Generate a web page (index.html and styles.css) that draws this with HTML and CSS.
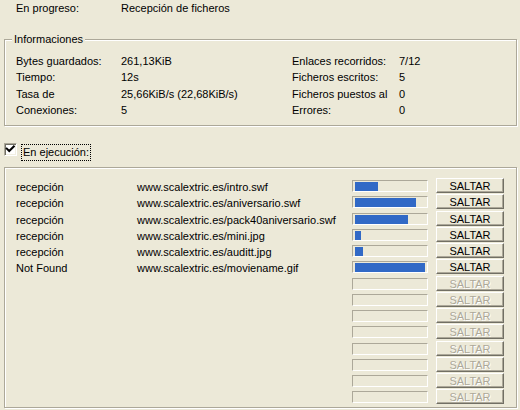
FILE: index.html
```html
<!DOCTYPE html>
<html lang="es">
<head>
<meta charset="utf-8">
<title>Recepción de ficheros</title>
<link rel="stylesheet" href="styles.css">
</head>
<body>
<div class="dlg">
  <div class="status">
    <span>En progreso:</span>
    <span>Recepción de ficheros</span>
  </div>

  <div class="group info">
    <span class="legend">Informaciones</span>
    <div class="info-grid">
      <span>Bytes guardados:</span><span>261,13KiB</span><span>Enlaces recorridos:</span><span>7/12</span>
      <span>Tiempo:</span><span>12s</span><span>Ficheros escritos:</span><span>5</span>
      <span>Tasa de</span><span>25,66KiB/s (22,68KiB/s)</span><span>Ficheros puestos al</span><span>0</span>
      <span>Conexiones:</span><span>5</span><span>Errores:</span><span>0</span>
    </div>
  </div>

  <div class="check-row">
    <span class="checkbox"><svg width="11" height="11" viewBox="0 0 11 11"><polyline points="1.8,4.6 4.2,7 8.8,2.4" fill="none" stroke="#000" stroke-width="2" stroke-linecap="square"/></svg></span>
    <span class="focus">En ejecución:</span>
  </div>

  <div class="group list">
    <div class="row"><span class="cell">recepción</span><span class="cell">www.scalextric.es/intro.swf</span><span class="bar"><span class="fill" style="width:23px"></span></span><span class="btn">SALTAR</span></div>
    <div class="row"><span class="cell">recepción</span><span class="cell">www.scalextric.es/aniversario.swf</span><span class="bar"><span class="fill" style="width:61px"></span></span><span class="btn">SALTAR</span></div>
    <div class="row"><span class="cell">recepción</span><span class="cell">www.scalextric.es/pack40aniversario.swf</span><span class="bar"><span class="fill" style="width:53px"></span></span><span class="btn">SALTAR</span></div>
    <div class="row"><span class="cell">recepción</span><span class="cell">www.scalextric.es/mini.jpg</span><span class="bar"><span class="fill" style="width:6px"></span></span><span class="btn">SALTAR</span></div>
    <div class="row"><span class="cell">recepción</span><span class="cell">www.scalextric.es/auditt.jpg</span><span class="bar"><span class="fill" style="width:8px"></span></span><span class="btn">SALTAR</span></div>
    <div class="row"><span class="cell">Not Found</span><span class="cell">www.scalextric.es/moviename.gif</span><span class="bar"><span class="fill" style="width:70px"></span></span><span class="btn">SALTAR</span></div>
    <div class="row"><span class="cell"></span><span class="cell"></span><span class="bar"></span><span class="btn disabled">SALTAR</span></div>
    <div class="row"><span class="cell"></span><span class="cell"></span><span class="bar"></span><span class="btn disabled">SALTAR</span></div>
    <div class="row"><span class="cell"></span><span class="cell"></span><span class="bar"></span><span class="btn disabled">SALTAR</span></div>
    <div class="row"><span class="cell"></span><span class="cell"></span><span class="bar"></span><span class="btn disabled">SALTAR</span></div>
    <div class="row"><span class="cell"></span><span class="cell"></span><span class="bar"></span><span class="btn disabled">SALTAR</span></div>
    <div class="row"><span class="cell"></span><span class="cell"></span><span class="bar"></span><span class="btn disabled">SALTAR</span></div>
    <div class="row"><span class="cell"></span><span class="cell"></span><span class="bar"></span><span class="btn disabled">SALTAR</span></div>
    <div class="row"><span class="cell"></span><span class="cell"></span><span class="bar"></span><span class="btn disabled">SALTAR</span></div>
  </div>
</div>
</body>
</html>
```

FILE: styles.css
```css
html, body {
  margin: 0;
  padding: 0;
}

body {
  background: #ECE9D8;
  color: #000;
  font-family: "Liberation Sans", Arial, sans-serif;
  font-size: 11px;
  width: 520px;
  height: 410px;
  overflow: hidden;
}

.dlg {
  display: flex;
  flex-direction: column;
}

.status {
  display: grid;
  grid-template-columns: 105px 1fr;
  padding-left: 16px;
  line-height: 16px;
  height: 16px;
}

.group {
  position: relative;
  box-sizing: border-box;
  width: 513px;
  margin-left: 4px;
  border: 1px solid #ACA899;
  box-shadow: inset 1px 1px #FFFFFF, 1px 1px #FFFFFF;
}

.info {
  margin-top: 23px;
  padding: 13px 0 7px 11px;
}

.legend {
  position: absolute;
  top: -9px;
  left: 7px;
  padding: 0 2px;
  line-height: 16px;
  background: #ECE9D8;
}

.info-grid {
  display: grid;
  grid-template-columns: 105px 171px 107px 1fr;
  grid-auto-rows: 16.25px;
  line-height: 16px;
  white-space: nowrap;
}

.check-row {
  display: flex;
  align-items: flex-start;
  height: 17px;
  margin-top: 17px;
  margin-left: 4px;
}

.checkbox {
  box-sizing: border-box;
  width: 13px;
  height: 13px;
  border: 1px solid;
  border-color: #ACA899 #FFFFFF #FFFFFF #ACA899;
  box-shadow: inset 1px 1px #716F64, inset -1px -1px #F1EFE2;
  background: #FFFFFF;
  display: flex;
}

.checkbox svg {
  display: block;
}

.focus {
  margin-left: 4px;
  margin-top: 1px;
  border: 1px dotted #000;
  padding: 0 1px;
  line-height: 15px;
  white-space: nowrap;
}

.list {
  margin-top: 7px;
  padding: 10px 11px 1.5px 11px;
}

.row {
  display: grid;
  grid-template-columns: 121px 215px 84px 68px;
  align-items: start;
  height: 16.25px;
}

.cell {
  padding-top: 1px;
  line-height: 16px;
  white-space: nowrap;
}

.bar {
  box-sizing: border-box;
  display: flex;
  width: 76px;
  height: 12px;
  margin-top: 2px;
  padding: 1px 2px 0 2px;
  border: 1px solid;
  border-color: #ACA899 #FFFFFF #FFFFFF #ACA899;
}

.fill {
  display: block;
  height: 9px;
  background: #3169C6;
}

.btn {
  box-sizing: border-box;
  height: 15px;
  padding-top: 1px;
  line-height: 13px;
  text-align: center;
  border: 1px solid;
  border-color: #FFFFFF #716F64 #716F64 #FFFFFF;
  box-shadow: inset -1px -1px #ACA899;
  background: #ECE9D8;
  overflow: hidden;
}

.btn.disabled {
  color: #ACA899;
  text-shadow: 1px 1px #FFFFFF;
}
```
